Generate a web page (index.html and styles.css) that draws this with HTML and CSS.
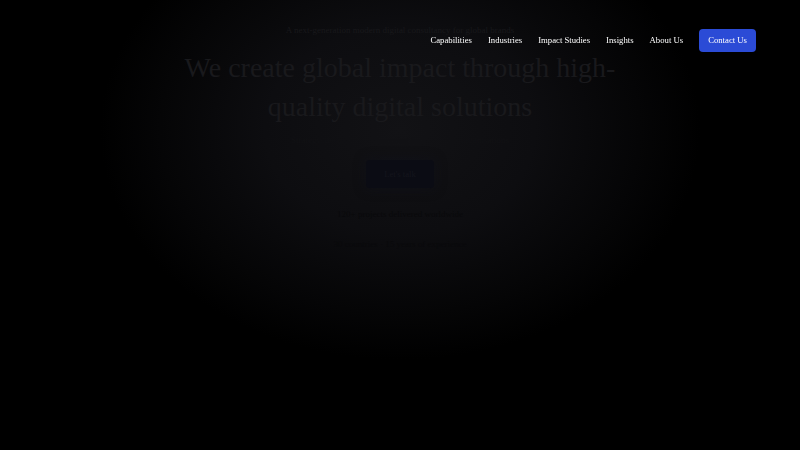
FILE: index.html
```html
<!DOCTYPE html>
<html lang="en">
<head>
<meta charset="utf-8">
<title>Global Impact</title>
<link rel="stylesheet" href="styles.css">
</head>
<body>
<header class="nav">
  <nav class="nav-links">
    <a href="#" class="nav-link">Capabilities</a>
    <a href="#" class="nav-link">Industries</a>
    <a href="#" class="nav-link">Impact Studies</a>
    <a href="#" class="nav-link">Insights</a>
    <a href="#" class="nav-link">About Us</a>
    <a href="#" class="nav-cta">Contact Us</a>
  </nav>
</header>
<main class="hero">
  <div class="hero-inner">
    <p class="eyebrow">A next-generation modern digital consultancy for global brands</p>
    <h1 class="headline">We create global impact through high-quality digital solutions</h1>
    <p class="sub">Strategy, design and engineering for ambitious organisations</p>
    <a href="#" class="hero-btn">Let's talk</a>
    <div class="stats">
      <span class="stat">120+ projects delivered worldwide</span>
      <span class="stat">30 countries · 15 years of experience</span>
    </div>
  </div>
</main>
</body>
</html>
```
FILE: styles.css
```css
* { box-sizing: border-box; }
html, body { margin: 0; padding: 0; height: 100%; }
body {
  background: #000;
  font-family: "Liberation Serif", "Times New Roman", serif;
  color: #fff;
  overflow: hidden;
}
.nav {
  position: fixed;
  top: 0;
  left: 0;
  right: 0;
  display: flex;
  justify-content: flex-end;
  padding: 29px 44px 0 0;
  z-index: 10;
}
.nav-links {
  display: flex;
  align-items: center;
  gap: 16px;
}
.nav-link {
  color: #fff;
  text-decoration: none;
  font-size: 8.7px;
  line-height: 10px;
  margin-bottom: 2px;
}
.nav-cta {
  color: #fff;
  text-decoration: none;
  font-size: 8.7px;
  background: #2b4bd6;
  border-radius: 4px;
  height: 23px;
  padding: 0 9px 1px;
  display: flex;
  align-items: center;
}
.hero {
  height: 450px;
  background: radial-gradient(ellipse 300px 230px at 400px 130px, #121215 0%, #0d0d10 45%, #050506 80%, #000 100%);
}
.hero-inner {
  width: 480px;
  margin: 0 auto;
  padding-top: 24px;
  display: flex;
  flex-direction: column;
  align-items: center;
  text-align: center;
}
.eyebrow {
  margin: 0;
  font-size: 9px;
  color: #18181b;
  line-height: 12px;
}
.headline {
  margin: 12px 0 0;
  font-size: 28px;
  font-weight: 400;
  line-height: 39px;
  color: #19191c;
  width: 450px;
}
.sub {
  margin: 8px 0 0;
  font-size: 9px;
  line-height: 12px;
  color: #111114;
}
.hero-btn {
  margin-top: 14px;
  width: 68px;
  height: 28px;
  border-radius: 4px;
  background: #0b0c14;
  box-shadow: 0 0 12px rgba(16, 17, 30, 0.5);
  color: #14151c;
  font-size: 8.7px;
  text-decoration: none;
  display: flex;
  align-items: center;
  justify-content: center;
}
.stats {
  margin-top: 20px;
  display: flex;
  flex-direction: column;
  align-items: center;
  gap: 18px;
  font-size: 9px;
  line-height: 12px;
  color: #09090b;
}
```
